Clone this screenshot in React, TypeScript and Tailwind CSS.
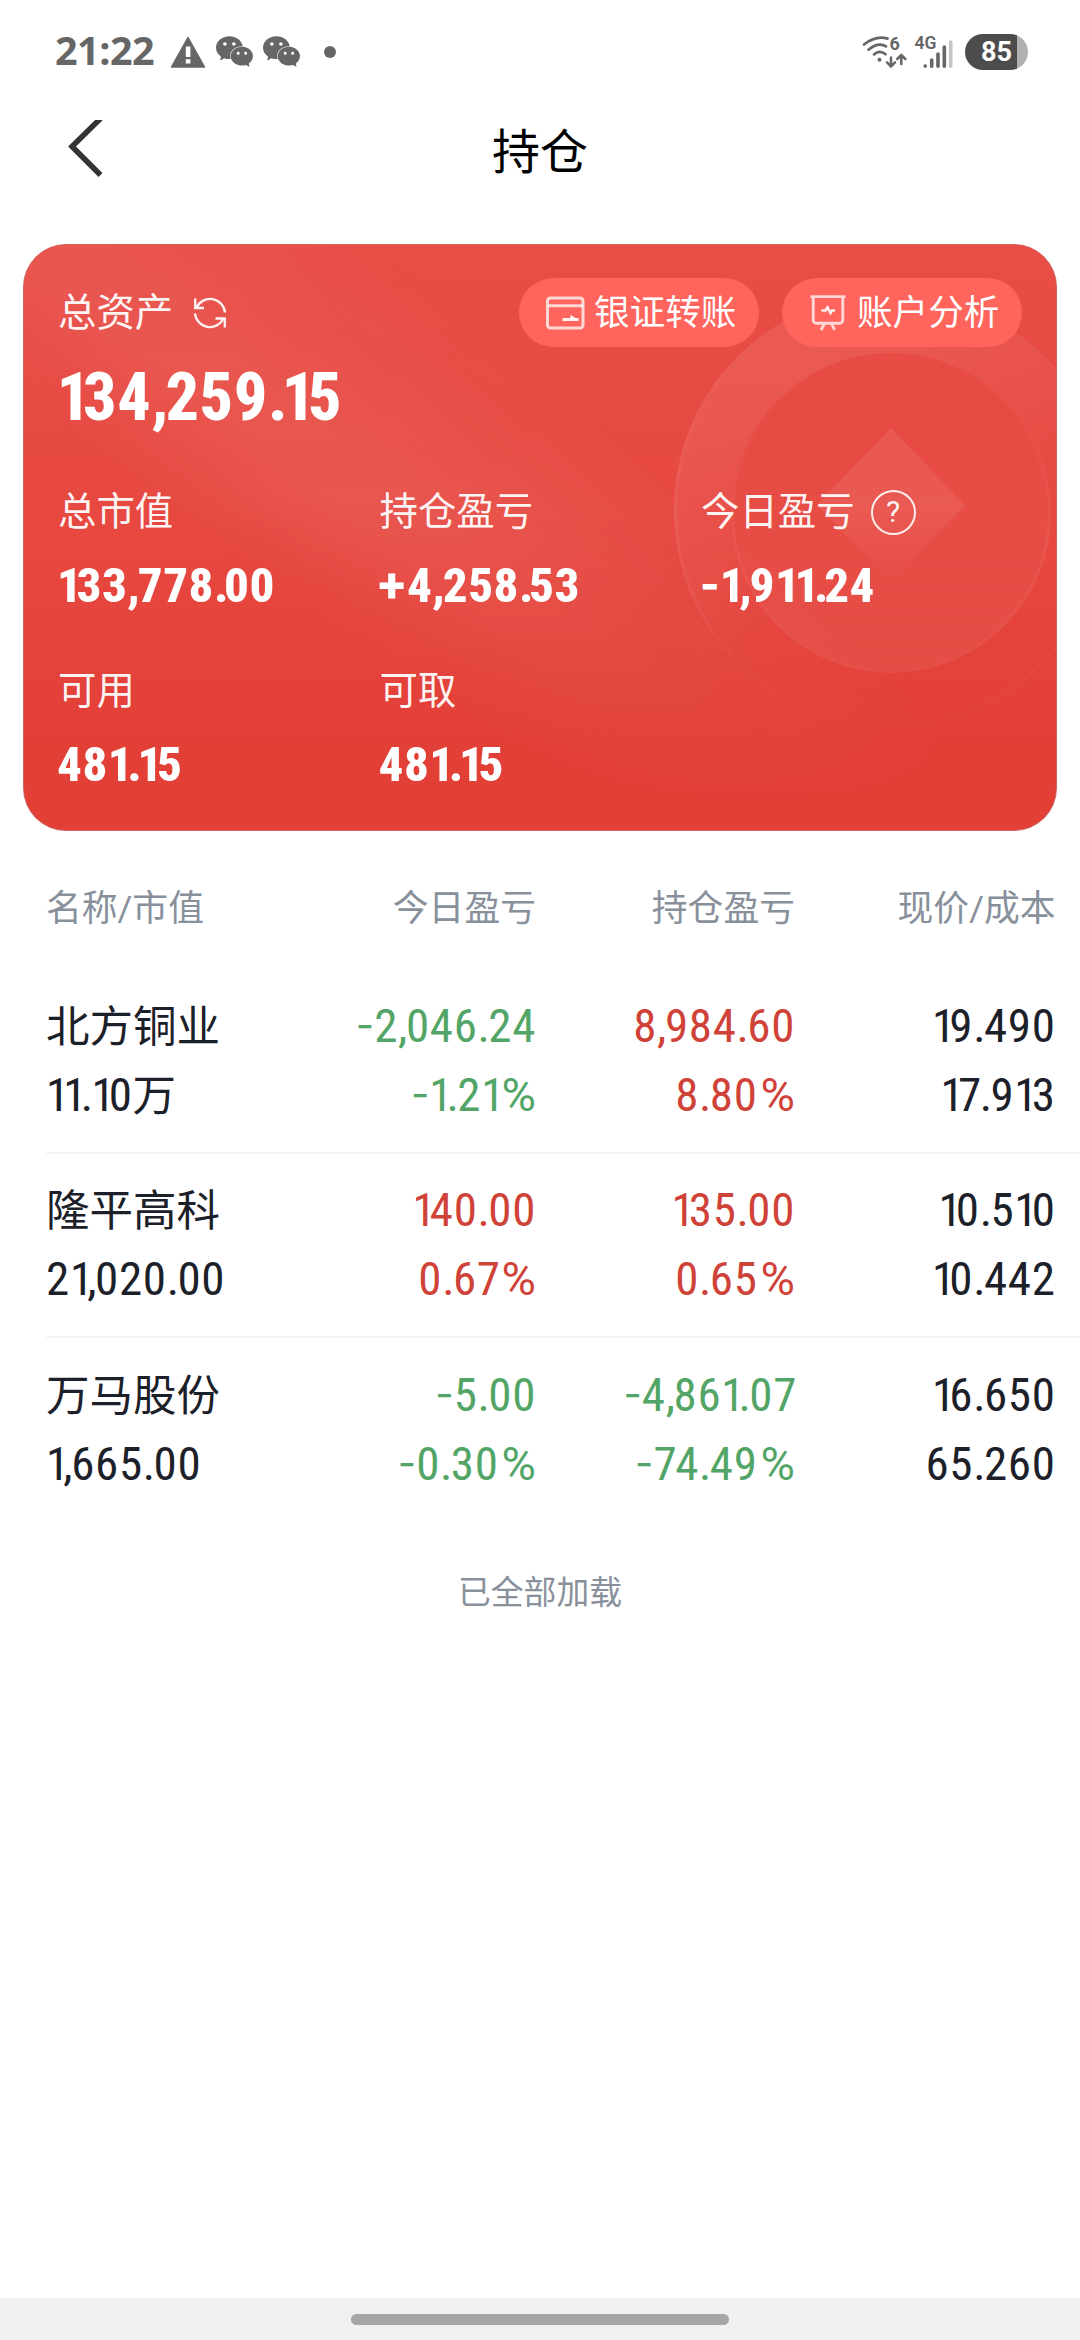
import { SiWechat } from "react-icons/si";

type Tone = "up" | "down" | "flat";

type Holding = {
  name: string;
  value: string;
  today: [string, string];
  total: [string, string];
  price: [string, string];
  todayTone: Tone;
  totalTone: Tone;
};

const holdings: Holding[] = [
  {
    name: "北方铜业",
    value: "11.10万",
    today: ["-2,046.24", "-1.21%"],
    total: ["8,984.60", "8.80%"],
    price: ["19.490", "17.913"],
    todayTone: "down",
    totalTone: "up",
  },
  {
    name: "隆平高科",
    value: "21,020.00",
    today: ["140.00", "0.67%"],
    total: ["135.00", "0.65%"],
    price: ["10.510", "10.442"],
    todayTone: "up",
    totalTone: "up",
  },
  {
    name: "万马股份",
    value: "1,665.00",
    today: ["-5.00", "-0.30%"],
    total: ["-4,861.07", "-74.49%"],
    price: ["16.650", "65.260"],
    todayTone: "down",
    totalTone: "down",
  },
];

const toneClass: Record<Tone, string> = {
  up: "text-[#cf4238]",
  down: "text-[#52a566]",
  flat: "text-[#1c2029]",
};

/* Condensed figures with proportional spacing for the narrow characters. */
function Num({ text, bold = false }: { text: string; bold?: boolean }) {
  return (
    <span
      className={
        bold
          ? "-ml-[0.02em] whitespace-nowrap [font-stretch:75%] font-extrabold tracking-[0.01em]"
          : "whitespace-nowrap [font-stretch:75%] tracking-[0.014em]"
      }
    >
      {text.split(/([17.,%+-]|[\u4e00-\u9fff]+)/).filter(Boolean).map((part, i) => {
        if (part === "1")
          return <span key={i} className={bold ? "tracking-[-0.11em]" : "tracking-[-0.125em]"}>{part}</span>;
        if (part === "7")
          return <span key={i} className={bold ? "tracking-[0.01em]" : "tracking-[-0.03em]"}>{part}</span>;
        if (part === ".")
          return <span key={i} className={bold ? "tracking-[-0.09em]" : "tracking-[-0.035em]"}>{part}</span>;
        if (part === ",")
          return <span key={i} className={bold ? "tracking-[-0.045em]" : "tracking-[-0.03em]"}>{part}</span>;
        if (part === "%")
          return <span key={i} className="ml-[3px] tracking-[0em] [font-stretch:100%]">{part}</span>;
        if (part === "+")
          return <span key={i} className="tracking-[0.04em] [font-stretch:100%]">{part}</span>;
        if (part === "-")
          return (
            <span key={i} className="relative -top-[0.07em] font-['Inter'] text-[0.85em] leading-none tracking-[0em]">
              {part}
            </span>
          );
        if (/[\u4e00-\u9fff]/.test(part))
          return <span key={i} className="text-[43.5px] tracking-[0em]">{part}</span>;
        return <span key={i}>{part}</span>;
      })}
    </span>
  );
}

function StatusBar() {
  return (
    <div className="flex h-[103px] items-center pr-[52px] pl-[55px] text-[#666]">
      <span className="mb-[3px] w-[115px] font-['Open_Sans'] text-[39.5px] leading-[40px] font-bold tracking-[-0.5px]">21:22</span>
      <svg className="h-[32px] w-[36px]" viewBox="0 0 36 32">
        <path d="M18 1.5 34.5 31h-33z" fill="#666" stroke="#666" strokeWidth="1.5" strokeLinejoin="round" />
        <path d="M15.8 10.5h4.6v10.5h-4.6zM15.8 23.3h4.6v4.2h-4.6z" fill="#fff" />
      </svg>
      <SiWechat className="ml-[10px] size-[37px]" />
      <SiWechat className="ml-[10px] size-[37px]" />
      <span className="ml-[24px] size-[12px] rounded-full bg-[#666]" />
      <div className="ml-auto flex items-center">
        <svg className="h-[36px] w-[46px] overflow-visible" viewBox="862 33 46 36" fill="none" stroke="#666" strokeLinecap="round">
          <path d="M864 43.5Q876 34.2 887.5 37.6" strokeWidth="2.7" />
          <path d="M868.5 48.7Q878.5 40.6 886 45.4" strokeWidth="2.7" />
          <path d="M874 53.4Q879.6 48.6 885.6 53.2" strokeWidth="2.7" />
          <circle cx="879.5" cy="58.7" r="2" fill="#666" stroke="none" />
          <path d="M891 56.5v8.6M887 61.4l4 4 4-4M901.3 63V54.4M897.3 58l4-4 4 4" strokeWidth="2.5" />
          <text x="889.5" y="48.8" fill="#666" stroke="none" className="font-['Roboto'] text-[18px] font-bold">6</text>
        </svg>
        <svg className="ml-[2px] h-[44px] w-[44px] overflow-visible" viewBox="910 29 44 44">
          <text x="914.5" y="47.6" fill="#666" className="font-['Roboto'] text-[17.5px] font-semibold">4G</text>
          <g stroke="#666" strokeWidth="3.6" strokeLinecap="round">
            <path d="M925.2 65v.1M931.7 59v6.2M938 53v12.2M944.3 46v19.2" />
            <path d="M950.7 41v24.2" stroke="#c4c4c4" />
          </g>
        </svg>
        <div className="ml-[11px] flex h-[36px] w-[63px] items-center justify-center rounded-full bg-[linear-gradient(90deg,#4c4c4c_52px,#b1b1b1_52px)] pt-[2px] font-['Roboto'] text-[27px] leading-none font-bold text-white">
          85
        </div>
      </div>
    </div>
  );
}

function CardBackdrop() {
  return (
    <>
      <div className="absolute inset-0 bg-[linear-gradient(38deg,transparent_31%,rgba(255,255,255,0.075)_41%,rgba(255,255,255,0.075)_46%,transparent_62%)] [mask-image:linear-gradient(180deg,rgba(0,0,0,0.7)_0%,#000_45%,transparent_98%)]" />
      <svg className="absolute inset-0 size-full" viewBox="24 245 1032 585">
        <defs>
          <linearGradient id="ring" x1="0" y1="0" x2="0.5" y2="1">
            <stop offset="0.25" stopColor="#fff" stopOpacity="0.08" />
            <stop offset="0.72" stopColor="#fff" stopOpacity="0" />
          </linearGradient>
          <linearGradient id="disc" x1="0" y1="0" x2="0" y2="1">
            <stop offset="0.2" stopColor="#fff" stopOpacity="0" />
            <stop offset="1" stopColor="#fff" stopOpacity="0.06" />
          </linearGradient>
          <linearGradient id="diamond" x1="0" y1="0" x2="0" y2="1">
            <stop offset="0.5" stopColor="#fff" stopOpacity="0.075" />
            <stop offset="1" stopColor="#fff" stopOpacity="0" />
          </linearGradient>
          <linearGradient id="rim" x1="0" y1="0" x2="0" y2="1">
            <stop offset="0" stopColor="#fff" stopOpacity="0" />
            <stop offset="0.55" stopColor="#fff" stopOpacity="0.05" />
            <stop offset="1" stopColor="#fff" stopOpacity="0.01" />
          </linearGradient>
        </defs>
        <path
          d="M674 510a217 217 0 1 1 434 0a217 217 0 1 1-434 0zM731 513a160 160 0 1 0 320 0a160 160 0 1 0-320 0z"
          fill="url(#ring)"
          fillRule="evenodd"
        />
        <circle cx="891" cy="510" r="215.5" fill="none" stroke="url(#rim)" strokeWidth="3" />
        <circle cx="891" cy="513" r="160" fill="url(#disc)" />
        <circle cx="891" cy="513" r="158.5" fill="none" stroke="url(#rim)" strokeWidth="3" />
        <path d="M891 428 965 505 891 582 817 505z" fill="url(#diamond)" />
      </svg>
    </>
  );
}

function Stat({ label, value, help = false }: { label: string; value: string; help?: boolean }) {
  return (
    <div>
      <div className="flex h-[38px] items-center text-[38.4px] leading-[38px] whitespace-nowrap text-white/95">
        {label}
        {help && (
          <span className="ml-[16px] flex size-[45px] shrink-0 items-center justify-center rounded-full border-2 border-white/90 text-[30px] leading-none">
            ?
          </span>
        )}
      </div>
      <div className="mt-[30px] text-[49px] leading-[49px]">
        <Num bold text={value} />
      </div>
    </div>
  );
}

function AssetCard() {
  return (
    <section className="relative mx-[23px] mt-[43px] h-[587px] overflow-hidden rounded-[43px] border border-[#cf625b] bg-[linear-gradient(180deg,#e84d46_0%,#e74941_45%,#e23f37_85%)] px-[34px] pt-[33px] text-white">
      <CardBackdrop />
      <div className="relative">
        <div className="flex h-[69px] items-center">
          <span className="text-[38.4px] leading-[38px] text-white/95">总资产</span>
          <svg className="ml-[20px] size-[34px]" viewBox="0 0 34 34" fill="none" stroke="#fff" strokeOpacity="0.92" strokeWidth="2.4">
            <path d="M32 16.5A15 15 0 0 0 3.5 11.5M2 17.5A15 15 0 0 0 30.5 22.5" />
            <path d="M2.2 2.5V12H11M31.8 31.5V22.5H22.5" />
          </svg>
          <div className="ml-auto flex gap-[23px] text-[35.6px] leading-[38px]">
            <div className="flex h-[69px] w-[240px] items-center rounded-full bg-[#ff645d] pl-[26px] whitespace-nowrap">
              <svg className="mr-[9px] size-[40px] shrink-0" viewBox="0 0 40 40" fill="none" stroke="#fff" strokeOpacity="0.75" strokeWidth="3">
                <rect x="2.5" y="5" width="35.5" height="30" rx="3" />
                <path d="M2.5 12.8h35.5" />
                <path d="M17.5 26.5h16" strokeOpacity="0.9" />
                <path d="M25.5 26.5v-4.5l7.5 4.5z" fill="#fff" stroke="none" />
              </svg>
              银证转账
            </div>
            <div className="flex h-[69px] w-[240px] items-center rounded-full bg-[#ff645d] pl-[26px] whitespace-nowrap">
              <svg className="mr-[9px] size-[40px] shrink-0" viewBox="0 0 40 40" fill="none" stroke="#fff" strokeOpacity="0.75" strokeWidth="2.9">
                <path d="M2.5 3.6h35M5.2 3.6v23.6a3 3 0 0 0 3 3h23.6a3 3 0 0 0 3-3V3.6M16.5 30.5l-3.5 6.5M23.5 30.5l3 6.5" />
                <path d="M13.5 17.5h4l2-3 3 5.5 1.5-2.5h3" strokeWidth="2.6" strokeOpacity="0.9" />
              </svg>
              账户分析
            </div>
          </div>
        </div>
        <div className="mt-[18px] text-[66px] leading-[66px]">
          <Num bold text="134,259.15" />
        </div>
        <div className="mt-[62px] grid grid-cols-[321.5px_321.5px_1fr] gap-y-[62px]">
          <Stat label="总市值" value="133,778.00" />
          <Stat label="持仓盈亏" value="+4,258.53" />
          <Stat label="今日盈亏" value="-1,911.24" help />
          <Stat label="可用" value="481.15" />
          <Stat label="可取" value="481.15" />
        </div>
      </div>
    </section>
  );
}

function Pair({ lines, tone }: { lines: [string, string]; tone: Tone }) {
  return (
    <div className={`text-right ${toneClass[tone]}`}>
      {lines.map((line) => (
        <div key={line} className="h-[69px] text-[47px] leading-[69px]">
          <Num text={line} />
        </div>
      ))}
    </div>
  );
}

export default function App() {
  return (
    <div className="flex h-[2340px] w-[1080px] flex-col overflow-hidden bg-white font-['Roboto','Noto_Sans_CJK_SC',sans-serif]">
      <StatusBar />
      <header className="grid h-[98px] grid-cols-[1fr_auto_1fr] items-center">
        <svg className="ml-[66px] h-[64px] w-[40px]" viewBox="0 0 40 64" fill="none" stroke="#333336" strokeWidth="5.5">
          <path d="M34.5 3.5 6 31.5 34.5 60" transform="translate(0 -5)" />
        </svg>
        <h1 className="pt-[2px] text-[48px] leading-[48px] text-black">持仓</h1>
      </header>

      <AssetCard />

      <div className="grid h-[138.5px] grid-cols-[230px_260px_259px_260.5px] pt-[60px] pl-[46px] text-[35.8px] leading-[36px] text-[#88909b]">
        <span>名称/市值</span>
        <span className="text-right">今日盈亏</span>
        <span className="text-right">持仓盈亏</span>
        <span className="text-right">现价/成本</span>
      </div>

      <div className="pl-[46px]">
        {holdings.map((h, i) => (
          <div
            key={h.name}
            className={`grid h-[184.4px] grid-cols-[230px_260px_259px_260.5px] border-b-2 pt-[21.5px] ${
              i < holdings.length - 1 ? "border-[#f5f5f6]" : "border-transparent"
            }`}
          >
            <div className="text-[47px] whitespace-nowrap text-[#1c2029]">
              <div className="h-[69px] leading-[69px]">
                <span className="text-[43.5px]">{h.name}</span>
              </div>
              <div className="h-[69px] leading-[69px]">
                <Num text={h.value} />
              </div>
            </div>
            <Pair lines={h.today} tone={h.todayTone} />
            <Pair lines={h.total} tone={h.totalTone} />
            <Pair lines={h.price} tone="flat" />
          </div>
        ))}
      </div>

      <p className="mt-[53px] text-center text-[32.8px] leading-[34px] text-[#88909b]">已全部加载</p>

      <div className="mt-auto flex h-[42px] justify-center bg-[#f0f0f2] pt-[16px]">
        <div className="h-[11px] w-[378px] rounded-full bg-[#a5a5a7]" />
      </div>
    </div>
  );
}
